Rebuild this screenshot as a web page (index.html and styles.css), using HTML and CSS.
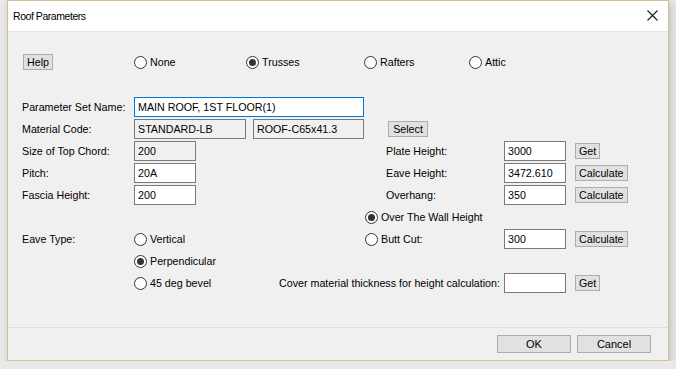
FILE: index.html
```html
<!DOCTYPE html>
<html lang="en">
<head>
  <meta charset="UTF-8">
  <title>Roof Parameters</title>
  <link rel="stylesheet" href="styles.css">
</head>
<body>

  <div class="ventana">
    <div class="barra">
      <span class="titulo">Roof Parameters</span>
      <svg class="cerrar" width="11" height="11" viewBox="0 0 11 11">
        <path d="M0.5 0.5 L10.5 10.5 M10.5 0.5 L0.5 10.5" stroke="#1a1a1a" stroke-width="1.1" fill="none"/>
      </svg>
    </div>

    <div class="contenido">
      <div class="fila-tipo">
        <div class="celda-help"><button class="btn">Help</button></div>
        <label class="radio c-none"><span class="circulo"></span>None</label>
        <label class="radio c-trusses"><span class="circulo on"></span>Trusses</label>
        <label class="radio c-rafters"><span class="circulo"></span>Rafters</label>
        <label class="radio"><span class="circulo"></span>Attic</label>
      </div>

      <div class="forma">
        <span class="etq" style="grid-row:1">Parameter Set Name:</span>
        <div class="caja foco ancho-nombre" style="grid-row:1">MAIN ROOF, 1ST FLOOR(1)</div>

        <span class="etq" style="grid-row:2">Material Code:</span>
        <div class="caja gris ancho-mat" style="grid-row:2">STANDARD-LB</div>
        <div class="caja gris ancho-roof" style="grid-row:2">ROOF-C65x41.3</div>
        <button class="btn btn-select" style="grid-row:2">Select</button>

        <span class="etq" style="grid-row:3">Size of Top Chord:</span>
        <div class="caja gris ancho-corto" style="grid-row:3">200</div>
        <span class="etq-der" style="grid-row:3">Plate Height:</span>
        <div class="caja valor" style="grid-row:3">3000</div>
        <button class="btn accion" style="grid-row:3">Get</button>

        <span class="etq" style="grid-row:4">Pitch:</span>
        <div class="caja ancho-corto" style="grid-row:4">20A</div>
        <span class="etq-der" style="grid-row:4">Eave Height:</span>
        <div class="caja valor" style="grid-row:4">3472.610</div>
        <button class="btn accion" style="grid-row:4">Calculate</button>

        <span class="etq" style="grid-row:5">Fascia Height:</span>
        <div class="caja ancho-corto" style="grid-row:5">200</div>
        <span class="etq-der" style="grid-row:5">Overhang:</span>
        <div class="caja valor" style="grid-row:5">350</div>
        <button class="btn accion" style="grid-row:5">Calculate</button>

        <label class="radio r-pared" style="grid-row:6"><span class="circulo on"></span>Over The Wall Height</label>

        <span class="etq" style="grid-row:7">Eave Type:</span>
        <label class="radio r-alero" style="grid-row:7"><span class="circulo"></span>Vertical</label>
        <label class="radio r-pared" style="grid-row:7"><span class="circulo"></span>Butt Cut:</label>
        <div class="caja valor" style="grid-row:7">300</div>
        <button class="btn accion" style="grid-row:7">Calculate</button>

        <label class="radio r-alero" style="grid-row:8"><span class="circulo on"></span>Perpendicular</label>

        <label class="radio r-alero" style="grid-row:9"><span class="circulo"></span>45 deg bevel</label>
        <span class="etq-cubierta" style="grid-row:9">Cover material thickness for height calculation:</span>
        <div class="caja valor" style="grid-row:9"></div>
        <button class="btn accion" style="grid-row:9">Get</button>
      </div>
    </div>

    <div class="pie">
      <button class="btn grande">OK</button>
      <button class="btn grande">Cancel</button>
    </div>
  </div>

</body>
</html>
```

FILE: styles.css
```css
body {
  margin: 0;
  background-color: #e9e9e9;
  font-family: 'Liberation Sans', Arial, sans-serif;
  font-size: 10.7px;
  color: #000;
}

.ventana {
  margin-left: 7px;
  width: 660px;
  height: 359px;
  border: 1px solid #d6bf93;
  background-color: #f0f0f0;
  box-shadow: 2px 3px 8px rgba(0,0,0,0.18);
  display: flex;
  flex-direction: column;
}

.barra {
  height: 30px;
  background-color: #fff;
  display: flex;
  align-items: center;
  justify-content: space-between;
  padding: 0 10px 0 5px;
  border-bottom: 1px solid #e3e3e3;
}

.titulo {
  font-size: 10.5px;
  letter-spacing: -0.45px;
}

.cerrar {
  margin-top: -1px;
}

.contenido {
  flex: 1;
  padding: 22px 0 0 14px;
}

/* fila de Help y tipo de techo */
.fila-tipo {
  display: flex;
  align-items: center;
  height: 16px;
}

.celda-help { width: 112px; padding-left: 1px; box-sizing: border-box; }
.c-none { width: 112px; }
.c-trusses { width: 118px; }
.c-rafters { width: 105px; }

.forma {
  margin-top: 27px;
  display: grid;
  grid-template-columns: 112px 119px 26px 86px 21px 118px 71px auto;
  grid-template-rows: repeat(9, 20px);
  row-gap: 2px;
}

.etq {
  grid-column: 1;
  align-self: center;
}

.etq-der {
  grid-column: 6;
  align-self: center;
}

.etq-cubierta {
  grid-column: 4 / span 3;
  align-self: center;
  white-space: nowrap;
}

.caja {
  box-sizing: border-box;
  height: 20px;
  border: 1px solid #7a7a7a;
  background-color: #fff;
  padding: 0 3px;
  line-height: 18px;
  white-space: nowrap;
  overflow: hidden;
}

.gris { background-color: #f0f0f0; }
.foco { border-color: #0078d7; }

.ancho-nombre { grid-column: 2 / span 4; width: 230px; }
.ancho-mat { grid-column: 2; width: 112px; }
.ancho-roof { grid-column: 3 / span 3; width: 111px; }
.ancho-corto { grid-column: 2; width: 62px; }
.valor { grid-column: 7; width: 62px; }

.btn {
  font-family: inherit;
  font-size: 10.7px;
  height: 16px;
  padding: 0 3px;
  background-color: #e1e1e1;
  border: 1px solid #adadad;
  color: #000;
  line-height: 14px;
  cursor: pointer;
}

.btn-select {
  grid-column: 6;
  justify-self: start;
  align-self: center;
  margin-left: 2px;
  width: 40px;
}

.accion {
  grid-column: 8;
  justify-self: start;
  align-self: center;
}

.radio {
  display: flex;
  align-items: center;
  white-space: nowrap;
}

.r-alero { grid-column: 2; }
.r-pared { grid-column: 5 / span 3; }

.circulo {
  box-sizing: border-box;
  width: 13px;
  height: 13px;
  border: 1px solid #333;
  border-radius: 50%;
  background-color: #fff;
  margin-right: 3px;
  display: flex;
  align-items: center;
  justify-content: center;
}

.circulo.on::after {
  content: "";
  width: 7px;
  height: 7px;
  border-radius: 50%;
  background-color: #333;
}

.pie {
  height: 33px;
  border-top: 1px solid #dfdfdf;
  display: flex;
  justify-content: flex-end;
  align-items: flex-start;
  gap: 6px;
  padding: 7px 17px 0 0;
  box-sizing: border-box;
}

.grande {
  width: 74px;
  height: 18px;
  font-size: 11px;
}
```
